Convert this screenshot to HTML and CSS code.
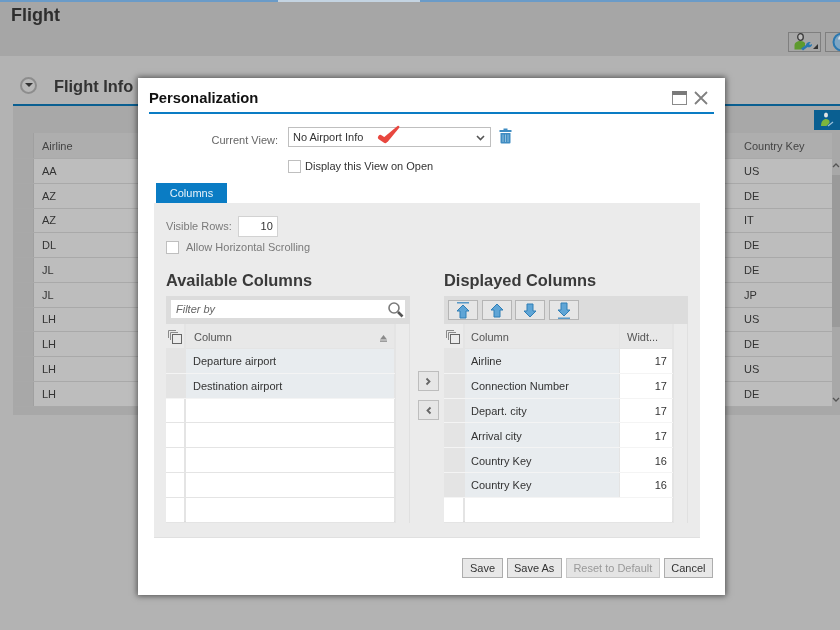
FILE: index.html
```html
<!DOCTYPE html>
<html lang="en">
<head>
<meta charset="utf-8">
<title>Flight</title>
<link rel="stylesheet" href="styles.css">
</head>
<body>
<div class="page">
  <div class="topbar"><span class="topbar-a"></span><span class="topbar-b"></span><span class="topbar-c"></span></div>
  <header class="head">
    <h1 class="head-title">Flight</h1>
    <div class="head-tools">
      <span class="head-btn head-btn-user">
        <svg width="18" height="18" viewBox="0 0 18 18"><ellipse cx="6.500" cy="4" rx="2.800" ry="3.300" fill="#bdbdbd" stroke="#3a3a3a" stroke-width="1.300"/><path d="M.5 16.500v-4C.5 9.500 3 8 6.500 8c2 0 3.500.7 4.500 2v2.500l-3.500 4z" fill="#5e9a2e"/><path d="M7 15.500l5-3.500c0-2 2-3.500 4.800-3l-1.800 2 1 1 2.200-1c0 2.500-2.500 3.700-4.700 3L9 17.500z" fill="#2a78b0"/></svg>
        <i class="corner"></i>
      </span>
      <span class="head-btn head-btn-help">
        <svg width="20" height="20" viewBox="0 0 20 20"><circle cx="10" cy="10" r="8.500" fill="#7ea6c4" stroke="#2a78b0" stroke-width="2"/><path d="M7 7.500c0-2 1.500-3 3-3s3 1 3 2.800c0 2.200-3 2.200-3 4.700M10 13v2.500" fill="none" stroke="#d4dfe7" stroke-width="1.800"/></svg>
      </span>
    </div>
  </header>
  <main class="content">
    <div class="section-head">
      <span class="collapse"><i></i></span>
      <h2 class="section-title">Flight Info</h2>
    </div>
    <div class="bg-table">
      <div class="bg-toolbar">
        <span class="bg-perso">
          <svg width="18" height="18" viewBox="0 0 18 18"><ellipse cx="8" cy="4" rx="2" ry="2.500" fill="#e4e4e4"/><path d="M3 15c0-5 2.500-7 5-7 2 0 3 1 3.500 2v2l-3 3z" fill="#7cb63c"/><path d="M10 15l5-4" stroke="#9cc0da" stroke-width="1.200"/></svg>
        </span>
      </div>
      <div class="bg-grid">
        <div class="bg-row bg-row-head"><i class="bg-sel"></i><span class="bg-first">Airline</span><span class="bg-last">Country Key</span></div>
        <div class="bg-row"><i class="bg-sel"></i><span class="bg-first">AA</span><span class="bg-last">US</span></div>
        <div class="bg-row"><i class="bg-sel"></i><span class="bg-first">AZ</span><span class="bg-last">DE</span></div>
        <div class="bg-row"><i class="bg-sel"></i><span class="bg-first">AZ</span><span class="bg-last">IT</span></div>
        <div class="bg-row"><i class="bg-sel"></i><span class="bg-first">DL</span><span class="bg-last">DE</span></div>
        <div class="bg-row"><i class="bg-sel"></i><span class="bg-first">JL</span><span class="bg-last">DE</span></div>
        <div class="bg-row"><i class="bg-sel"></i><span class="bg-first">JL</span><span class="bg-last">JP</span></div>
        <div class="bg-row"><i class="bg-sel"></i><span class="bg-first">LH</span><span class="bg-last">US</span></div>
        <div class="bg-row"><i class="bg-sel"></i><span class="bg-first">LH</span><span class="bg-last">DE</span></div>
        <div class="bg-row"><i class="bg-sel"></i><span class="bg-first">LH</span><span class="bg-last">US</span></div>
        <div class="bg-row"><i class="bg-sel"></i><span class="bg-first">LH</span><span class="bg-last">DE</span></div>
        <div class="bg-scroll">
          <svg class="bg-arrow" width="8" height="6" viewBox="0 0 8 6"><path d="M1 5l3-3 3 3" fill="none" stroke="#555" stroke-width="1.300"/></svg>
          <div class="bg-thumb"></div>
          <svg class="bg-arrow bg-arrow-down" width="8" height="6" viewBox="0 0 8 6"><path d="M1 1l3 3 3-3" fill="none" stroke="#555" stroke-width="1.300"/></svg>
        </div>
      </div>
      <div class="bg-foot"></div>
    </div>
  </main>

  <section class="dialog" aria-label="Personalization">
    <div class="dlg-head">
      <h3 class="dlg-title">Personalization</h3>
      <svg class="dlg-max" width="15" height="14" viewBox="0 0 15 14"><rect x=".5" y=".5" width="14" height="13" fill="#fff" stroke="#8a8a8a"/><rect x="0" y="0" width="15" height="4" fill="#7a7a7a"/></svg>
      <svg class="dlg-close" width="14" height="14" viewBox="0 0 14 14"><path d="M1 1l12 12M13 1L1 13" stroke="#808080" stroke-width="1.800"/></svg>
    </div>
    <div class="view-row">
      <label class="view-label">Current View:</label>
      <div class="select">
        <span>No Airport Info</span>
        <svg class="check" width="24" height="20" viewBox="0 0 24 20"><path d="M3.500 12.500L8 15.500" fill="none" stroke="#e8473f" stroke-width="5" stroke-linecap="round"/><path d="M5.500 13.500L20.500 1c1.500-.7 2.500.5 1.500 2L10.500 17z" fill="#e8473f"/></svg>
        <svg class="chev" width="9" height="6" viewBox="0 0 9 6"><path d="M1 1l3.500 3.500L8 1" fill="none" stroke="#555" stroke-width="1.600"/></svg>
      </div>
      <svg class="trash" width="13" height="16" viewBox="0 0 13 16"><path d="M4.500 2V.5h4V2h4v2H.5V2z" fill="#3f8cc2"/><path d="M1.500 5h10v9.500a1 1 0 0 1-1 1h-8a1 1 0 0 1-1-1z" fill="#3f8cc2"/><path d="M4 6.500v7.500M6.500 6.500v7.500M9 6.500v7.500" stroke="#8fbfdd" stroke-width="1"/></svg>
    </div>
    <div class="open-row">
      <i class="cb"></i><span class="cb-text">Display this View on Open</span>
    </div>
    <div class="tabs"><span class="tab">Columns</span></div>
    <div class="panel">
      <div class="rows-line">
        <span class="muted">Visible Rows:</span><span class="rows-input">10</span>
      </div>
      <div class="scroll-line">
        <i class="cb cb-panel"></i><span class="muted scroll-text">Allow Horizontal Scrolling</span>
      </div>
      <div class="lists">
        <div class="list list-left">
          <h4 class="list-title">Available Columns</h4>
          <div class="tbl">
            <div class="tbl-bar">
              <div class="filter"><span>Filter by</span>
                <svg width="17" height="17" viewBox="0 0 17 17"><circle cx="7" cy="7" r="5" fill="#fff" stroke="#7a7a7a" stroke-width="1.600"/><path d="M11 11l4.500 4.500" stroke="#555" stroke-width="2.600"/></svg>
              </div>
            </div>
            <div class="tr tr-head">
              <span class="sel sel-head"><svg class="copy" width="14" height="14" viewBox="0 0 14 14"><path d="M.5 8V.5H8M2.500 10V2.500H10" fill="none" stroke="#8a8a8a"/><rect x="4.500" y="4.500" width="9" height="9" fill="none" stroke="#666"/></svg></span>
              <span class="cell cell-name">Column<svg class="sort" width="7" height="7" viewBox="0 0 7 7"><path d="M3.500 0L7 4.500H0z" fill="#8a8a8a"/><rect y="5.500" width="7" height="1.300" fill="#8a8a8a"/></svg></span>
              <span class="rest"></span>
            </div>
            <div class="tr"><span class="sel"></span><span class="cell cell-name cell-fill">Departure airport</span><span class="rest"></span></div>
            <div class="tr"><span class="sel"></span><span class="cell cell-name cell-fill">Destination airport</span><span class="rest"></span></div>
            <div class="tr tr-empty"><span class="sel"></span><span class="cell cell-name"></span><span class="rest"></span></div>
            <div class="tr tr-empty"><span class="sel"></span><span class="cell cell-name"></span><span class="rest"></span></div>
            <div class="tr tr-empty"><span class="sel"></span><span class="cell cell-name"></span><span class="rest"></span></div>
            <div class="tr tr-empty"><span class="sel"></span><span class="cell cell-name"></span><span class="rest"></span></div>
            <div class="tr tr-empty"><span class="sel"></span><span class="cell cell-name"></span><span class="rest"></span></div>
          </div>
        </div>
        <div class="movers">
          <span class="mover"><svg width="7" height="9" viewBox="0 0 7 9"><path d="M1.500 1.500l3 3-3 3" fill="none" stroke="#666" stroke-width="1.800"/></svg></span>
          <span class="mover"><svg width="7" height="9" viewBox="0 0 7 9"><path d="M5.500 1.500l-3 3 3 3" fill="none" stroke="#666" stroke-width="1.800"/></svg></span>
        </div>
        <div class="list list-right">
          <h4 class="list-title">Displayed Columns</h4>
          <div class="tbl">
            <div class="tbl-bar tbl-bar-btns">
              <span class="arrow-btn"><svg width="14" height="17" viewBox="0 0 14 17"><path d="M1 .8h12" stroke="#3f8cc2" stroke-width="1.300"/><path d="M7 3l6 6H10v7H4V9H1z" fill="#5fa5d6" stroke="#2f7eb6"/></svg></span>
              <span class="arrow-btn"><svg width="14" height="15" viewBox="0 0 14 15"><path d="M7 1l6 6H10v7H4V7H1z" fill="#5fa5d6" stroke="#2f7eb6"/></svg></span>
              <span class="arrow-btn"><svg width="14" height="15" viewBox="0 0 14 15"><path d="M7 14L1 8h3V1h6v7h3z" fill="#5fa5d6" stroke="#2f7eb6"/></svg></span>
              <span class="arrow-btn"><svg width="14" height="17" viewBox="0 0 14 17"><path d="M7 14L1 8h3V1h6v7h3z" fill="#5fa5d6" stroke="#2f7eb6"/><path d="M1 16.200h12" stroke="#3f8cc2" stroke-width="1.300"/></svg></span>
            </div>
            <div class="tr tr-head tr-r">
              <span class="sel sel-head"><svg class="copy" width="14" height="14" viewBox="0 0 14 14"><path d="M.5 8V.5H8M2.500 10V2.500H10" fill="none" stroke="#8a8a8a"/><rect x="4.500" y="4.500" width="9" height="9" fill="none" stroke="#666"/></svg></span>
              <span class="cell cell-col">Column</span>
              <span class="cell cell-width-head">Widt...</span>
              <span class="rest"></span>
            </div>
            <div class="tr tr-r"><span class="sel"></span><span class="cell cell-col cell-fill">Airline</span><span class="cell cell-num">17</span><span class="rest"></span></div>
            <div class="tr tr-r"><span class="sel"></span><span class="cell cell-col cell-fill">Connection Number</span><span class="cell cell-num">17</span><span class="rest"></span></div>
            <div class="tr tr-r"><span class="sel"></span><span class="cell cell-col cell-fill">Depart. city</span><span class="cell cell-num">17</span><span class="rest"></span></div>
            <div class="tr tr-r"><span class="sel"></span><span class="cell cell-col cell-fill">Arrival city</span><span class="cell cell-num">17</span><span class="rest"></span></div>
            <div class="tr tr-r"><span class="sel"></span><span class="cell cell-col cell-fill">Country Key</span><span class="cell cell-num">16</span><span class="rest"></span></div>
            <div class="tr tr-r"><span class="sel"></span><span class="cell cell-col cell-fill">Country Key</span><span class="cell cell-num">16</span><span class="rest"></span></div>
            <div class="tr tr-r tr-empty"><span class="sel"></span><span class="cell cell-blank"></span><span class="rest"></span></div>
          </div>
        </div>
      </div>
    </div>
    <div class="dlg-foot">
      <span class="btn">Save</span>
      <span class="btn">Save As</span>
      <span class="btn btn-off">Reset to Default</span>
      <span class="btn">Cancel</span>
    </div>
  </section>
</div>
</body>
</html>
```
FILE: styles.css
```css
* { box-sizing: border-box; }
html, body { margin: 0; padding: 0; }
body { font-family: "Liberation Sans", Arial, sans-serif; font-size: 11px; color: #333; }
h1, h2, h3, h4 { margin: 0; }
i { display: block; }

.page { position: relative; width: 840px; height: 630px; overflow: hidden; background: #b3b3b3; filter: blur(.35px); }

.topbar { display: flex; height: 2px; background: #6a9bc8; }
.topbar-a { width: 278px; }
.topbar-b { width: 142px; background: #c4d4e2; }
.topbar-c { flex: 1; }

.head { height: 54px; background: #a6a6a6; display: flex; justify-content: space-between; padding: 3px 0 0 11px; }
.head-title { font-size: 18px; line-height: 20px; font-weight: bold; color: #2e2e2e; }
.head-tools { display: flex; gap: 4px; padding-top: 27px; margin-right: -23px; align-items: flex-start; }
.head-btn { position: relative; display: flex; align-items: center; height: 20px; border: 1px solid #7f7f7f; background: #a6a6a6; }
.head-btn-user { width: 33px; padding-left: 5px; }
.head-btn-help { width: 38px; padding-left: 6px; }
.corner { position: absolute; right: 2px; bottom: 2px; border-style: solid; border-width: 0 0 5px 5px; border-color: transparent transparent #333 transparent; }

.content { padding: 0 0 0 13px; }
.section-head { display: flex; align-items: center; height: 50px; padding: 12px 0 0 7px; border-bottom: 2px solid #0a5f91; }
.collapse { width: 17px; height: 17px; margin-top: -2px; border: 2px solid #8d8d8d; border-radius: 50%; display: flex; align-items: center; justify-content: center; background: #b8b8b8; }
.collapse i { border-style: solid; border-width: 4px 4px 0 4px; border-color: #333 transparent transparent transparent; }
.section-title { margin-left: 17px; font-size: 16.4px; line-height: 20px; font-weight: bold; color: #333; }

.bg-toolbar { height: 27px; background: #a8a8a8; display: flex; justify-content: flex-end; padding: 4px 0 0 0; }
.bg-perso { width: 26px; height: 20px; background: #0a5f91; display: flex; align-items: center; justify-content: center; }
.bg-grid { position: relative; background: #a8a8a8; padding-left: 2px; }
.bg-row { display: flex; align-items: center; height: 24.75px; background: #bdbdbd; border-bottom: 1px solid #a9a9a9; color: #333; font-size: 11px; margin-right: 8px; position: relative; }
.bg-row-head { height: 26px; background: #aeaeae; color: #444; }
.bg-sel { width: 19px; height: 100%; background: #a8a8a8; border-right: 1px solid #a0a0a0; }
.bg-first { margin-left: 8px; font-size: 11px; }
.bg-last { position: absolute; left: 729px; }
.bg-row-head .bg-last { left: 728px; padding-left: 1px; height: 100%; display: flex; align-items: center; }
.bg-scroll { position: absolute; top: 26px; right: 0; bottom: 0; width: 8px; background: #a8a8a8; display: flex; flex-direction: column; align-items: center; padding-top: 3px; }
.bg-thumb { width: 8px; height: 152px; background: #9a9a9a; margin-top: 7px; }
.bg-arrow-down { margin-top: auto; margin-bottom: 4px; }
.bg-foot { height: 8px; background: #a8a8a8; }

.dialog { position: absolute; left: 138px; top: 78px; width: 587px; height: 517px; background: #fff; box-shadow: 0 0 6px 1px rgba(0,0,0,.55); padding: 0 11px; display: flex; flex-direction: column; color: #333; }
.dlg-head { display: flex; align-items: center; height: 36px; padding-top: 5px; border-bottom: 2px solid #0a7cc4; flex: none; }
.dlg-title { font-size: 14.8px; line-height: 18px; font-weight: bold; color: #111; flex: 1; }
.dlg-close { margin: 0 6px 0 7px; }

.view-row { display: flex; align-items: flex-start; margin-top: 13px; }
.view-label { width: 129px; text-align: right; color: #666; padding-top: 7px; }
.select { position: relative; margin-left: 10px; width: 203px; height: 20px; border: 1px solid #bfbfbf; display: flex; align-items: center; padding-left: 4px; color: #333; }
.select span { margin-top: -1px; }
.check { position: absolute; left: 88px; top: -3px; }
.chev { position: absolute; right: 5px; top: 7px; }
.trash { margin: 1px 0 0 8px; }

.open-row { display: flex; align-items: center; height: 14px; margin: 12px 0 0 139px; }
.cb { width: 13px; height: 13px; border: 1px solid #bfbfbf; background: #fff; flex: none; }
.cb-text { margin-left: 4px; color: #333; }

.tabs { margin: 10px 0 0 7px; display: flex; }
.tab { width: 71px; height: 20px; background: #0a7cc4; color: #e8f3fa; display: flex; align-items: center; justify-content: center; }

.panel { margin-left: 5px; width: 546px; height: 335px; background: #ebebeb; border-bottom: 1px solid #e0e0e0; padding: 13px 12px 0; }
.muted { color: #7a7a7a; }
.rows-line { display: flex; align-items: center; height: 20px; }
.rows-input { margin-left: 6px; width: 40px; height: 21px; background: #fff; border: 1px solid #d2d2d2; text-align: right; padding-right: 4px; line-height: 19px; color: #333; }
.scroll-line { display: flex; align-items: center; height: 14px; margin-top: 4px; }
.scroll-text { margin-left: 7px; }

.lists { display: flex; margin-top: 16px; }
.list { width: 244px; flex: none; }
.list-title { font-size: 16.4px; line-height: 18px; font-weight: bold; color: #3a3a3a; height: 26px; padding-top: 1px; }
.tbl { background: #e4e4e4; height: 226px; border-bottom: 1px solid #dcdcdc; }
.tbl-bar { height: 28px; background: #dcdcdc; padding: 4px 5px 0; }
.filter { height: 18px; background: #fff; display: flex; align-items: center; justify-content: space-between; padding: 0 1px 0 5px; color: #666; font-style: italic; }
.tbl-bar-btns { display: flex; gap: 3.5px; padding: 4px 4px 0; }
.arrow-btn { width: 30px; height: 20px; border: 1px solid #b5b5b5; background: #e6e6e6; display: flex; align-items: center; justify-content: center; }

.tr { display: flex; height: 24.8px; border-bottom: 1px solid #f4f4f4; }
.tr-empty { border-bottom-color: #e4e4e4; }
.tr-head { height: 25px; border-bottom-color: #e4e4e4; }
.tr-head .cell { padding-top: 2px; }
.tr-r .cell { padding-top: 1px; }
.tr-r.tr-head .cell { padding-top: 2px; }
.sel { width: 18px; background: #e4e4e4; flex: none; }
.tr-empty .sel { background: #fff; }
.sel-head { background: #ebebeb; padding: 6px 0 0 2px; }
.tr-r .sel { width: 19px; }
.cell { display: flex; align-items: center; padding-left: 8px; margin-left: 2px; background: #fff; color: #333; }
.tr-head .cell { background: #e8e8e8; color: #555; }
.cell-name { width: 208px; position: relative; }
.cell-col { width: 154px; padding-left: 6px; }
.cell-fill { background: #e8ecef; }
.cell-fill.cell-name { padding-left: 7px; }
.cell-width-head { width: 52px; margin-left: 1px; padding-left: 7px; }
.cell-num { width: 52px; margin-left: 1px; padding: 0 5px 0 0; justify-content: flex-end; }
.cell-blank { width: 207px; }
.rest { flex: 1; background: #ebebeb; margin: 0 0 -1px 1px; border-left: 1px solid #e4e4e4; border-right: 1px solid #e0e0e0; }
.sort { position: absolute; right: 7px; top: 11px; }

.movers { width: 34px; flex: none; display: flex; flex-direction: column; align-items: center; gap: 9px; padding: 101px 0 0 2px; }
.mover { width: 21px; height: 20px; border: 1px solid #bdbdbd; background: #e6e6e6; display: flex; align-items: center; justify-content: center; }

.dlg-foot { display: flex; justify-content: flex-end; gap: 4px; margin-top: 20px; padding-right: 1px; }
.btn { height: 20px; padding: 0 6.5px; border: 1px solid #adadad; background: #e8e8e8; color: #333; display: flex; align-items: center; }
.btn-off { color: #999; border-color: #c8c8c8; background: #e4e4e4; }
```
